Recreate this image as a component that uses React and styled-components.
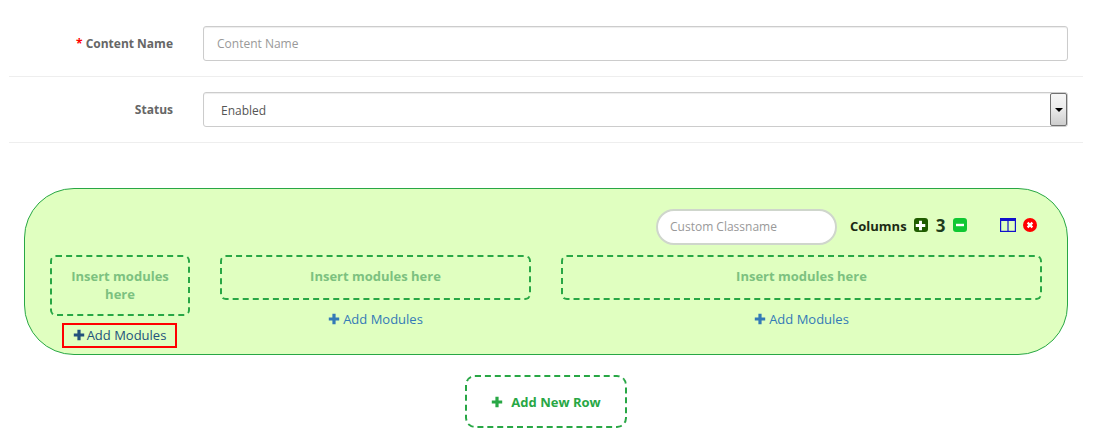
import React from "react";
import styled, { createGlobalStyle } from "styled-components";

const GlobalStyle = createGlobalStyle`
  html, body {
    margin: 0;
    padding: 0;
    background: #fff;
    font-family: "Open Sans", "Liberation Sans", sans-serif;
    overflow: hidden;
  }
  * {
    box-sizing: border-box;
  }
`;

const Page = styled.div`
  width: 1093px;
  height: 445px;
  padding: 11px 10px 0 9px;
`;

const FormRow = styled.div`
  display: flex;
  align-items: center;
  width: 1074px;
  height: 66px;
  padding-right: 15px;
  border-bottom: 1px solid #eeeeee;
`;

const Label = styled.label`
  flex: 0 0 164px;
  text-align: right;
  font-size: 12px;
  font-weight: 700;
  color: #666;
  margin-right: 30px;
`;

const Required = styled.span`
  color: #f00;
  margin-right: 3px;
`;

const TextInput = styled.input`
  flex: 1;
  height: 35px;
  padding: 0 13px;
  border: 1px solid #ccc;
  border-radius: 3px;
  font: 12px "Open Sans", sans-serif;
  color: #555;
  outline: none;
  box-shadow: inset 0 1px 1px rgba(0, 0, 0, 0.075);
  &::placeholder {
    color: #999;
    opacity: 1;
  }
`;

const SelectBox = styled.div`
  flex: 1;
  height: 35px;
  display: flex;
  align-items: center;
  justify-content: space-between;
  padding-left: 17px;
  border: 1px solid #ccc;
  border-radius: 3px;
  font-size: 12px;
  color: #555;
  box-shadow: inset 0 1px 1px rgba(0, 0, 0, 0.075);
`;

const SelectValue = styled.span`
  margin-top: 2px;
`;

const SelectArrow = styled.span`
  width: 17px;
  height: 33px;
  display: flex;
  align-items: center;
  justify-content: center;
  border: 1px solid #707070;
  border-radius: 2px;
  background: linear-gradient(#f6f6f6 0%, #ececec 45%, #cdcdcd 100%);
`;

const Caret = styled.span`
  width: 0;
  height: 0;
  border-left: 4px solid transparent;
  border-right: 4px solid transparent;
  border-top: 4px solid #000;
`;

const Panel = styled.section`
  width: 1044px;
  height: 167px;
  margin: 45px 0 0 15px;
  padding: 20px 11px 0;
  background: #e0ffc0;
  border: 1px solid #28a745;
  border-radius: 50px;
`;

const Toolbar = styled.div`
  display: flex;
  align-items: center;
  height: 36px;
  padding-left: 620px;
`;

const ClassInput = styled.input`
  width: 181px;
  height: 36px;
  padding: 0 12px 2px;
  border: 2px solid #cfd6cc;
  border-radius: 18px;
  background: #fff;
  font: 12px "Open Sans", sans-serif;
  outline: none;
  &::placeholder {
    color: #999;
    opacity: 1;
  }
`;

const Controls = styled.div`
  display: flex;
  align-items: center;
  margin-bottom: 4px;
`;

const ColumnsLabel = styled.span`
  margin: 2px 0 0 13px;
  font-size: 13px;
  font-weight: 700;
  color: #1c2b14;
`;

const SquareButton = styled.span`
  width: 14px;
  height: 14px;
  margin-left: ${(p) => p.$gap}px;
  display: flex;
  align-items: center;
  justify-content: center;
  border-radius: 3px;
  background: ${(p) => p.$color};
`;

const ColumnCount = styled.span`
  width: 10px;
  margin-left: 8px;
  font-size: 17px;
  font-weight: 700;
  line-height: 1;
  color: #1e3b1c;
`;

const IconSlot = styled.span`
  display: flex;
  margin-left: ${(p) => p.$gap}px;
`;

const Columns = styled.div`
  display: flex;
  gap: 30px;
  margin-top: 10px;
  padding-left: 14px;
`;

const Column = styled.div`
  width: ${(p) => p.$width}px;
  display: flex;
  flex-direction: column;
  align-items: center;
`;

const DropZone = styled.div`
  width: 100%;
  min-height: 45px;
  padding: 10px 10px 11px;
  border: 2px dashed #28a745;
  border-radius: 6px;
  text-align: center;
  font-size: 13px;
  line-height: 18px;
  font-weight: 700;
  color: #7cc17f;
`;

const AddModules = styled.a`
  display: flex;
  align-items: center;
  gap: ${(p) => (p.$active ? "2px" : "3px")};
  height: ${(p) => (p.$active ? "25px" : "20px")};
  margin: ${(p) => (p.$active ? "7px 1px 0 0" : "9px 0 0")};
  padding: ${(p) => (p.$active ? "0 9px 1px" : "0")};
  border: ${(p) => (p.$active ? "2px solid #f00" : "none")};
  font-size: 13px;
  color: ${(p) => (p.$active ? "#23527c" : "#337ab7")};
  white-space: nowrap;
`;

const AddRowWrap = styled.div`
  display: flex;
  justify-content: center;
  margin-top: 20px;
`;

const AddRowButton = styled.button`
  width: 162px;
  height: 53px;
  display: flex;
  align-items: center;
  justify-content: center;
  gap: 8px;
  background: #fff;
  border: 2px dashed #28a745;
  border-radius: 10px;
  font: 700 13px "Open Sans", sans-serif;
  color: #28a745;
`;

const PlusIcon = ({ size = 12, color = "currentColor" }) => (
  <svg width={size} height={size} viewBox="0 0 12 12">
    <path d="M4.4 0.8h3.2v3.6h3.6v3.2H7.6v3.6H4.4V7.6H0.8V4.4h3.6z" fill={color} />
  </svg>
);

const MinusGlyph = () => (
  <svg width="10" height="10" viewBox="0 0 10 10">
    <rect x="1" y="3.8" width="8" height="2.4" fill="#fff" />
  </svg>
);

const SplitIcon = () => (
  <svg width="16" height="14" viewBox="0 0 16 14">
    <rect x="0.6" y="0.6" width="14.8" height="12.8" fill="none" stroke="#1111cc" strokeWidth="1.2" />
    <rect x="0.6" y="0.6" width="14.8" height="2.4" fill="#1111cc" />
    <rect x="7.4" y="1" width="1.2" height="12" fill="#1111cc" />
  </svg>
);

const RemoveIcon = () => (
  <svg width="14" height="14" viewBox="0 0 14 14">
    <circle cx="7" cy="7" r="7" fill="#f00" />
    <path d="M4.6 4.6l4.8 4.8M9.4 4.6l-4.8 4.8" stroke="#fff" strokeWidth="2.2" />
  </svg>
);

const columns = [
  { width: 140, active: true },
  { width: 311 },
  { width: 481 },
];

const App = () => (
  <Page>
    <GlobalStyle />
    <FormRow>
      <Label>
        <Required>*</Required>Content Name
      </Label>
      <TextInput placeholder="Content Name" />
    </FormRow>
    <FormRow>
      <Label>Status</Label>
      <SelectBox>
        <SelectValue>Enabled</SelectValue>
        <SelectArrow>
          <Caret />
        </SelectArrow>
      </SelectBox>
    </FormRow>
    <Panel>
      <Toolbar>
        <ClassInput placeholder="Custom Classname" />
        <Controls>
          <ColumnsLabel>Columns</ColumnsLabel>
          <SquareButton $color="#1f5c00" $gap={7}>
            <PlusIcon size={11} color="#fff" />
          </SquareButton>
          <ColumnCount>3</ColumnCount>
          <SquareButton $color="#0fc832" $gap={7}>
            <MinusGlyph />
          </SquareButton>
          <IconSlot $gap={33}>
            <SplitIcon />
          </IconSlot>
          <IconSlot $gap={7}>
            <RemoveIcon />
          </IconSlot>
        </Controls>
      </Toolbar>
      <Columns>
        {columns.map((col) => (
          <Column key={col.width} $width={col.width}>
            <DropZone>Insert modules here</DropZone>
            <AddModules $active={col.active}>
              <PlusIcon />
              Add Modules
            </AddModules>
          </Column>
        ))}
      </Columns>
    </Panel>
    <AddRowWrap>
      <AddRowButton>
        <PlusIcon />
        Add New Row
      </AddRowButton>
    </AddRowWrap>
  </Page>
);

export default App;
